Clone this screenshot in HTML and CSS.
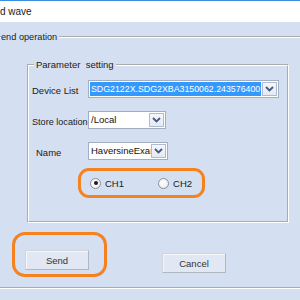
FILE: index.html
```html
<!DOCTYPE html>
<html>
<head>
<meta charset="utf-8">
<link rel="stylesheet" href="styles.css">
</head>
<body>
<div class="window">
  <div class="titlebar">d wave</div>
  <div class="client">
    <fieldset class="outer">
      <legend class="outer-legend">end operation</legend>
      <fieldset class="inner">
        <legend class="inner-legend">Parameter&nbsp; setting</legend>
        <div class="form">
          <label class="lbl">Device List</label>
          <div class="combo combo-device">
            <span class="combo-text"><span class="selected">SDG2122X.SDG2XBA3150062.243576400</span></span>
            <span class="arrow"><svg width="9" height="6" viewBox="0 0 9 6"><path d="M1 1 L4.5 4.5 L8 1" fill="none" stroke="#4a5875" stroke-width="1.8"/></svg></span>
          </div>
          <label class="lbl lbl-store">Store location</label>
          <div class="combo combo-store">
            <span class="combo-text">/Local</span>
            <span class="arrow"><svg width="9" height="6" viewBox="0 0 9 6"><path d="M1 1 L4.5 4.5 L8 1" fill="none" stroke="#4a5875" stroke-width="1.8"/></svg></span>
          </div>
          <label class="lbl lbl-name">Name</label>
          <div class="combo combo-name">
            <span class="combo-text">HaversineExample</span>
            <span class="arrow"><svg width="9" height="6" viewBox="0 0 9 6"><path d="M1 1 L4.5 4.5 L8 1" fill="none" stroke="#4a5875" stroke-width="1.8"/></svg></span>
          </div>
        </div>
        <div class="radios">
          <label class="radio"><span class="dot checked"></span>CH1</label>
          <label class="radio"><span class="dot"></span>CH2</label>
        </div>
      </fieldset>
      <div class="actions">
        <div class="highlight">
          <button class="btn">Send</button>
        </div>
        <button class="btn btn-cancel">Cancel</button>
      </div>
    </fieldset>
  </div>
</div>
</body>
</html>
```
FILE: styles.css
```css
html, body {
  margin: 0;
  padding: 0;
}
body {
  width: 300px;
  height: 300px;
  overflow: hidden;
  font-family: "Liberation Sans", Arial, sans-serif;
  font-size: 9.5px;
  color: #111;
}
.window {
  width: 300px;
  height: 300px;
  overflow: hidden;
}
.titlebar {
  height: 21px;
  border-top: 1px solid #3b8de0;
  background: #ffffff;
  font-size: 10px;
  line-height: 22px;
  color: #1a1a1a;
  white-space: nowrap;
}
.client {
  height: 276px;
  background: #d5dff2;
  border-bottom: 2px solid #3c8fdc;
  overflow: hidden;
  padding-top: 9px;
  box-sizing: content-box;
}
fieldset {
  border: 2px groove #ffffff;
  margin: 0;
  padding: 0;
  box-sizing: border-box;
}
legend {
  line-height: 12px;
  font-size: 9.5px;
  color: #1a1a1a;
  white-space: nowrap;
}
.outer {
  margin-left: -12px;
  width: 340px;
  height: 258px;
}
.outer-legend {
  margin-left: 11px;
  padding: 0 2px 0 0;
  font-size: 9.2px;
}
.inner {
  margin: 16px 0 0 37px;
  width: 262px;
  height: 164px;
  padding: 9px 0 0 3px;
}
.inner-legend {
  margin-left: 2px;
  padding: 0 2px;
}
.form {
  display: grid;
  grid-template-columns: 56px auto;
  row-gap: 13px;
  align-items: center;
  justify-items: start;
}
.lbl {
  padding-top: 3px;
  white-space: nowrap;
  color: #1a1a1a;
}
.lbl-store {
  font-size: 9.1px;
}
.lbl-name {
  padding-left: 4px;
}
.combo {
  height: 18px;
  box-sizing: border-box;
  background: #ffffff;
  border: 1px solid #a3aec3;
  display: flex;
  align-items: center;
  padding: 0 1px 0 1px;
  overflow: hidden;
}
.combo-device { width: 191px; }
.combo-store { width: 78px; }
.combo-name { width: 80px; }
.combo-text {
  flex: 1;
  min-width: 0;
  overflow: hidden;
  white-space: nowrap;
  font-size: 9.5px;
  line-height: 14px;
  padding-left: 1px;
}
.combo-device .combo-text {
  font-size: 8.8px;
  padding-left: 0;
}
.selected {
  background: #3399ff;
  color: #ffffff;
  display: inline-block;
  padding: 0 1px 0 1px;
}
.arrow {
  flex: none;
  width: 15px;
  height: 14px;
  box-sizing: border-box;
  border: 1px solid #aebcd3;
  background: linear-gradient(#f4f7fc, #e3e9f4);
  display: flex;
  align-items: center;
  justify-content: center;
}
.arrow svg { display: block; }
.radios {
  margin: 8px 0 0 46px;
  width: 127px;
  height: 30px;
  box-sizing: border-box;
  border: 3px solid #f5821f;
  border-radius: 11px;
  display: flex;
  align-items: center;
  padding-left: 9px;
  gap: 34px;
}
.radio {
  display: flex;
  align-items: center;
  gap: 4px;
  color: #1a1a1a;
  font-size: 9.5px;
}
.dot {
  width: 11px;
  height: 11px;
  box-sizing: border-box;
  border-radius: 50%;
  border: 1px solid #8c8f94;
  background: radial-gradient(circle at 40% 40%, #ffffff 0%, #eceff2 70%, #d9dde2 100%);
  display: flex;
  align-items: center;
  justify-content: center;
}
.dot.checked::after {
  content: "";
  width: 4px;
  height: 4px;
  border-radius: 50%;
  background: #1b1b1b;
}
.actions {
  display: flex;
  align-items: flex-start;
  margin: 9px 0 0 22px;
}
.highlight {
  width: 95px;
  height: 45px;
  box-sizing: border-box;
  border: 3px solid #f5821f;
  border-radius: 13px;
  padding: 15px 0 0 10px;
}
.btn {
  width: 64px;
  height: 20px;
  box-sizing: border-box;
  margin: 0;
  padding: 0;
  font-family: "Liberation Sans", Arial, sans-serif;
  font-size: 9.5px;
  color: #333333;
  background: #e1e7f3;
  border: 1px solid #b2b8c3;
  border-top-color: #d0d5de;
  border-left-color: #d0d5de;
  box-shadow: inset 1px 1px 0 #f5f7fb;
  border-radius: 0;
}
.btn-cancel {
  margin: 21px 0 0 55px;
}
```
